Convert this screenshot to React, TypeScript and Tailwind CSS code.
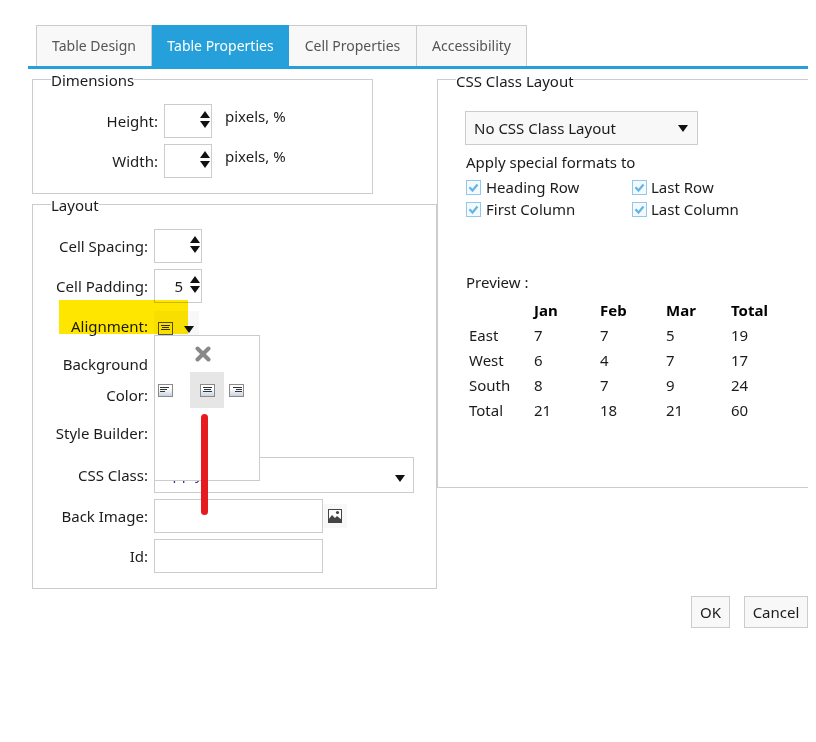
const Up = () => (
  <svg width="10" height="7" viewBox="0 0 10 7" className="block">
    <path d="M5 0L10 7H0z" fill="#111" />
  </svg>
);

const Down = () => (
  <svg width="10" height="7" viewBox="0 0 10 7" className="block">
    <path d="M0 0H10L5 7z" fill="#111" />
  </svg>
);

function Spinner({ value }: { value?: string }) {
  return (
    <div className="flex h-[34px] w-[48px] items-center border border-[#ccc] bg-white">
      <span className="flex-1 pr-[7px] text-right">{value}</span>
      <div className="mr-[1px] flex w-[10px] flex-col gap-[3px] pb-[3px]">
        <Up />
        <Down />
      </div>
    </div>
  );
}

function AlignIcon({ lines, plain }: { lines: "left" | "center" | "right"; plain?: boolean }) {
  const x = lines === "left" ? [2, 2, 2] : lines === "center" ? [3, 4, 3] : [4, 7, 6];
  const w = lines === "left" ? [9, 7, 5] : lines === "center" ? [9, 7, 9] : [9, 6, 7];
  return (
    <svg width="15" height="13" viewBox="0 0 15 13" className="block shrink-0">
      <defs>
        <linearGradient id="alignFill" x1="0" y1="0" x2="0" y2="1">
          <stop offset="0.35" stopColor="#ffffff" />
          <stop offset="1" stopColor="#c3d0de" />
        </linearGradient>
      </defs>
      <rect x="0.5" y="0.5" width="14" height="12" fill={plain ? "none" : "url(#alignFill)"} stroke={plain ? "#555" : "#8a8a8a"} />
      {[3, 5, 7].map((y, i) => (
        <rect key={y} x={x[i]} y={y} width={w[i]} height="1" fill="#333" />
      ))}
    </svg>
  );
}

function Check() {
  return (
    <svg width="15" height="15" viewBox="0 0 15 15" className="block shrink-0">
      <rect x="0.5" y="0.5" width="14" height="14" fill="#f4f9fd" stroke="#93c8ee" />
      <path d="M3.5 7.2L6.5 10.5L11.5 4.5" fill="none" stroke="#62b6e6" strokeWidth="2.2" />
    </svg>
  );
}

function CheckItem({ label, wide }: { label: string; wide?: boolean }) {
  return (
    <div className={wide ? "flex w-[166px] items-center gap-[5px]" : "flex items-center gap-[4px]"}>
      <Check />
      <span>{label}</span>
    </div>
  );
}

const tabs = ["Table Design", "Table Properties", "Cell Properties", "Accessibility"];
const tabWidth = ["w-[116px]", "w-[137px]", "w-[128px]", "w-[110px]"];

const previewRows = [
  ["East", "7", "7", "5", "19"],
  ["West", "6", "4", "7", "17"],
  ["South", "8", "7", "9", "24"],
  ["Total", "21", "18", "21", "60"],
];

export default function App() {
  return (
    <div className="relative h-[742px] w-[816px] overflow-hidden bg-white pt-[25px] text-[15px] leading-5 text-[#1c1c1c] [font-family:'Noto_Sans',sans-serif]">
      {/* tabs */}
      <div className="ml-[28px] mr-[8px] flex border-b-[3px] border-[#26a0da] pl-[8px] text-[14px]">
        {tabs.map((t, i) => (
          <div
            key={t}
            className={
              i === 1
                ? `flex h-[41px] items-center justify-center bg-[#26a0da] text-white ${tabWidth[i]}`
                : `flex h-[41px] items-center justify-center border border-b-0 border-[#ccc] bg-[#f8f8f8] text-[#555] ${tabWidth[i]} ${i > 1 ? "border-l-0" : ""}`
            }
          >
            {t}
          </div>
        ))}
      </div>

      <div className="flex items-start pl-[32px]">
        <div className="w-[405px]">
          <fieldset className="h-[125px] w-[341px] border border-[#ccc]">
            <legend className="ml-[18px] h-5 translate-y-px">Dimensions</legend>
            <div className="flex flex-col gap-[6px] pt-[15px]">
              <div className="flex items-center gap-[6px]">
                <label className="w-[125px] text-right">Height:</label>
                <Spinner />
                <span className="ml-[7px] -translate-y-[5px]">pixels, %</span>
              </div>
              <div className="flex items-center gap-[6px]">
                <label className="w-[125px] text-right">Width:</label>
                <Spinner />
                <span className="ml-[7px] -translate-y-[5px]">pixels, %</span>
              </div>
            </div>
          </fieldset>

          <fieldset className="h-[395px] w-[405px] border border-[#ccc]">
            <legend className="ml-[18px] h-5 translate-y-px">Layout</legend>
            <div className="flex flex-col pt-[15px]">
              <div className="flex items-center gap-[6px]">
                <label className="w-[115px] text-right">Cell Spacing:</label>
                <Spinner />
              </div>
              <div className="mt-[6px] flex items-center gap-[6px]">
                <label className="w-[115px] text-right">Cell Padding:</label>
                <Spinner value="5" />
              </div>
              <div className="mt-[8px] flex h-[34px] items-center gap-[6px]">
                <label className="w-[115px] pb-[4px] text-right">Alignment:</label>
                <div className="flex h-[34px] w-[45px] items-center bg-[#f8f8f8] pl-[4px] pt-[1px]">
                  <AlignIcon lines="center" plain />
                  <div className="ml-[11px] pt-[1px]">
                    <Down />
                  </div>
                </div>
              </div>
              <div className="mt-[4px] flex gap-[6px]">
                <label className="w-[115px] text-right leading-[31px]">
                  Background
                  <br />
                  Color:
                </label>
              </div>
              <div className="mt-[6px] flex h-[32px] items-center gap-[6px]">
                <label className="w-[115px] text-right">Style Builder:</label>
              </div>
              <div className="mt-[8px] flex items-center gap-[6px]">
                <label className="w-[115px] text-right">CSS Class:</label>
                <div className="flex h-[36px] w-[260px] items-center justify-between border border-[#ccc] bg-white px-[8px] text-[#4b2a8f]">
                  <span className="-translate-y-[2px]">Apply</span>
                  <div className="translate-y-[3px]">
                    <Down />
                  </div>
                </div>
              </div>
              <div className="mt-[6px] flex items-center gap-[6px]">
                <label className="w-[115px] text-right">Back Image:</label>
                <div className="h-[34px] w-[169px] border border-[#ccc] bg-white" />
                <div className="-ml-[6px] flex h-[24px] w-[24px] items-center justify-center bg-[#f8f8f8]">
                  <svg width="14" height="14" viewBox="0 0 14 14">
                    <rect width="14" height="14" fill="#444" />
                    <rect x="1" y="1" width="12" height="9" fill="#fff" />
                    <circle cx="9.5" cy="3.5" r="1.6" fill="#444" />
                    <path d="M0 11L4 6L7 9L9 7L14 11V14H0z" fill="#444" />
                  </svg>
                </div>
              </div>
              <div className="mt-[6px] flex items-center gap-[6px]">
                <label className="w-[115px] text-right">Id:</label>
                <div className="h-[34px] w-[169px] border border-[#ccc] bg-white" />
              </div>
            </div>
          </fieldset>
        </div>

        <fieldset className="h-[419px] w-[371px] border border-r-0 border-[#ccc]">
          <legend className="ml-[18px] h-5 translate-y-[2px]">CSS Class Layout</legend>
          <div className="pl-[27px] pt-[22px]">
            <div className="flex h-[34px] w-[233px] items-center justify-between border border-[#ccc] bg-[#f8f8f8] pl-[8px] pr-[9px]">
              <span>No CSS Class Layout</span>
              <Down />
            </div>
            <div className="ml-px">
              <div className="mt-[7px]">Apply special formats to</div>
              <div className="mt-[5px] flex">
                <CheckItem label="Heading Row" wide />
                <CheckItem label="Last Row" />
              </div>
              <div className="mt-[2px] flex">
                <CheckItem label="First Column" wide />
                <CheckItem label="Last Column" />
              </div>
              <div className="mt-[53px]">Preview :</div>
              <table className="mt-[5px] border-collapse">
                <thead>
                  <tr className="h-[25px] font-bold text-black">
                    <th className="w-[68px]" />
                    <th className="w-[66px] text-left font-bold">Jan</th>
                    <th className="w-[66px] text-left font-bold">Feb</th>
                    <th className="w-[65px] text-left font-bold">Mar</th>
                    <th className="w-[65px] text-left font-bold">Total</th>
                  </tr>
                </thead>
                <tbody>
                  {previewRows.map((row) => (
                    <tr key={row[0]} className="h-[25px]">
                      {row.map((c, i) => (
                        <td key={i} className={i === 0 ? "pl-[3px]" : ""}>
                          {c}
                        </td>
                      ))}
                    </tr>
                  ))}
                </tbody>
              </table>
            </div>
          </div>
        </fieldset>
      </div>

      <div className="mr-[8px] mt-[7px] flex justify-end gap-[14px]">
        <button className="h-[32px] w-[39px] border border-[#ccc] bg-[#f8f8f8]">OK</button>
        <button className="h-[32px] w-[64px] border border-[#ccc] bg-[#f8f8f8]">Cancel</button>
      </div>

      {/* highlighter mark */}
      <div className="absolute left-[59px] top-[300px] h-[34px] w-[129px] bg-[#ffe600] mix-blend-multiply" />

      {/* alignment popup */}
      <div className="absolute left-[154px] top-[335px] h-[146px] w-[106px] border border-[#ccc] bg-white">
        <div className="flex justify-center pr-[8px] pt-[10px]">
          <svg width="16" height="16" viewBox="0 0 16 16" className="block">
            <path d="M2.5 2.5L13.5 13.5M13.5 2.5L2.5 13.5" stroke="#888" strokeWidth="4" strokeLinecap="round" />
          </svg>
        </div>
        <div className="mt-[10px] flex items-center pl-[3px]">
          <AlignIcon lines="left" />
          <div className="ml-[17px] flex h-[36px] w-[34px] items-center justify-center bg-[#e6e6e6]">
            <AlignIcon lines="center" />
          </div>
          <div className="ml-[5px]">
            <AlignIcon lines="right" />
          </div>
        </div>
      </div>

      {/* red pen mark */}
      <div className="absolute left-[201px] top-[414px] h-[101px] w-[7px] rounded-full bg-[#e51b20]" />
    </div>
  );
}
